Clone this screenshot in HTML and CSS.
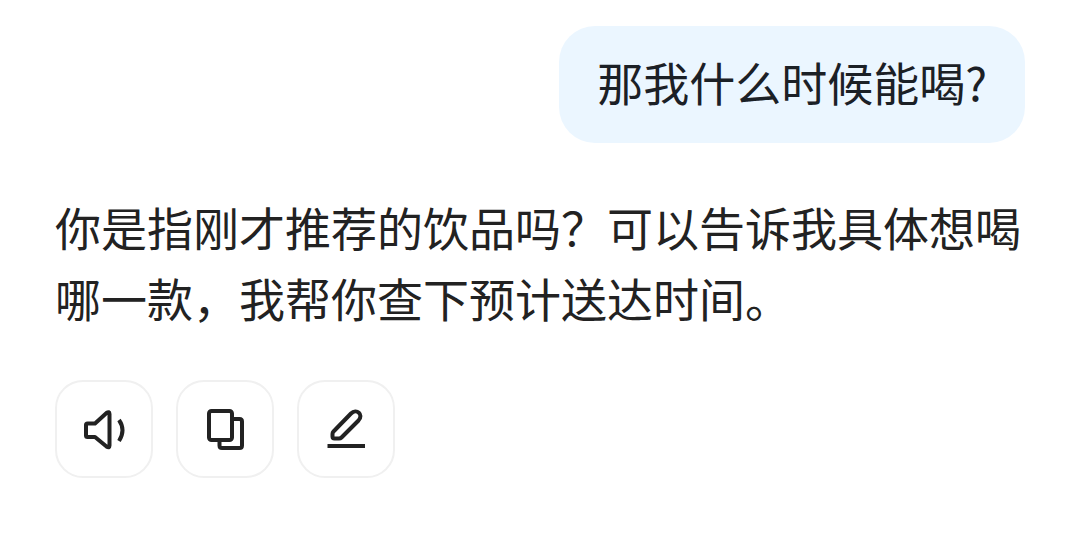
FILE: index.html
```html
<!DOCTYPE html>
<html lang="zh-CN">
<head>
<meta charset="utf-8">
<meta name="viewport" content="width=device-width, initial-scale=1">
<title>对话</title>
<link rel="stylesheet" href="styles.css">
</head>
<body>
<main class="chat">
  <p class="bubble">那我什么时候能喝?</p>
  <article class="reply">
    <p class="reply-text">你是指刚才推荐的饮品吗？可以告诉我具体想喝哪一款，我帮你查下预计送达时间。</p>
    <div class="actions">
      <button class="action" type="button" aria-label="朗读">
        <svg class="icon" viewBox="0 0 48 48" aria-hidden="true">
          <path d="M7.500 18.500H15L26.500 8Q29.500 6 29.500 9V40.500Q29.500 43.500 26.500 41.500L15 32H7.500Q6 32 6 30.500V20Q6 18.500 7.500 18.500Z"/>
          <path d="M39 15Q46 25 39 36"/>
        </svg>
      </button>
      <button class="action" type="button" aria-label="复制">
        <svg class="icon" viewBox="0 0 48 48" aria-hidden="true">
          <rect x="8" y="6" width="23" height="29" rx="2.5"/>
          <path d="M31 14H38.500Q41 14 41 16.500V40.500Q41 43 38.500 43H21Q18.500 43 18.500 40.500V35"/>
        </svg>
      </button>
      <button class="action" type="button" aria-label="编辑">
        <svg class="icon" viewBox="0 0 48 48" aria-hidden="true">
          <path d="M11.500 26.500L29 8.500C34.500 3 42 9.500 36.500 15.500L19.500 32.500Q18.500 33.500 17 33.500H12.500Q10.500 33.500 10.500 31.500V29Q10.500 27.500 11.500 26.500Z"/>
          <path d="M5.500 41H43"/>
        </svg>
      </button>
    </div>
  </article>
</main>
</body>
</html>
```
FILE: styles.css
```css
* {
  box-sizing: border-box;
}

body {
  margin: 0;
  background: #fff;
  color: #222;
  font-family: "Noto Sans CJK SC", sans-serif;
  font-size: 46px;
  line-height: 71px;
}

p {
  margin: 0;
}

.chat {
  display: flex;
  flex-direction: column;
  gap: 48px;
  padding: 26px 55px;
}

.bubble {
  align-self: flex-end;
  padding: 20px 38px 26px;
  border-radius: 36px;
  background: #ebf6ff;
  color: #1b2026;
}

.reply {
  display: flex;
  flex-direction: column;
  gap: 47px;
}

.actions {
  display: flex;
  gap: 23px;
}

.action {
  display: grid;
  place-items: center;
  width: 98px;
  height: 98px;
  padding: 0;
  border: 2px solid #f0f0f0;
  border-radius: 28px;
  background: #fff;
  color: #222;
}

.icon {
  width: 48px;
  height: 48px;
  fill: none;
  stroke: currentColor;
  stroke-width: 4;
  stroke-linejoin: round;
}
```
